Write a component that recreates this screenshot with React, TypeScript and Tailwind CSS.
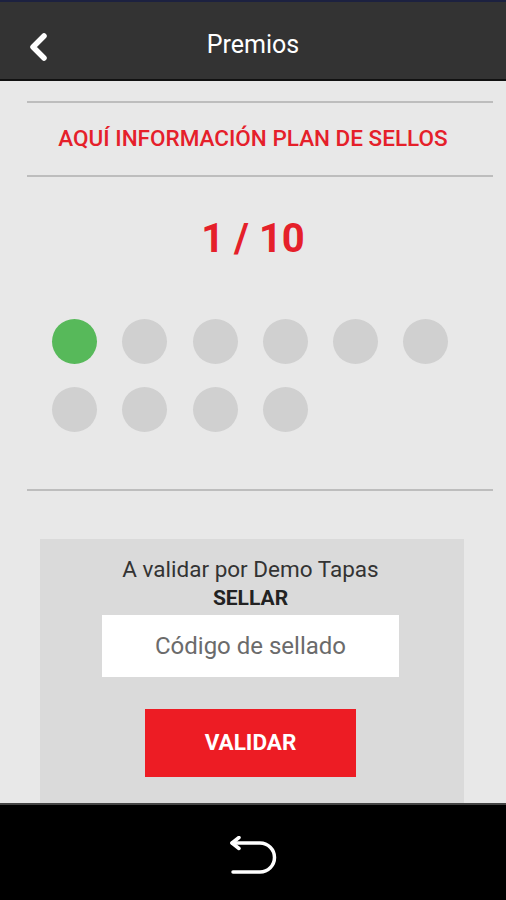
import React from "react";

export default function App() {
  const dots = Array.from({ length: 10 }, (_, i) => i);
  return (
    <div
      className="w-[506px] h-[900px] overflow-hidden bg-[#e8e8e8] flex flex-col relative"
      style={{ fontFamily: "Roboto, 'Liberation Sans', sans-serif" }}
    >
      <div className="h-[2px] bg-[#1c2140]" />
      <div className="h-[79px] bg-[#333333] border-b-2 border-[#111] flex items-center relative shrink-0">
        <svg className="absolute left-[26px] top-[29px]" width="24" height="32" viewBox="0 0 24 32">
          <path d="M18 5 L7 16 L18 27" fill="none" stroke="white" strokeWidth="5.5" strokeLinecap="round" strokeLinejoin="round" />
        </svg>
        <div className="w-full text-center text-white text-[25px] leading-none pt-[7px]">Premios</div>
      </div>

      <div className="pt-[20px] flex flex-col">
        <div className="h-[2px] bg-[#bdbdbd] ml-[27px] mr-[13px]" />
        <div className="h-[72px] flex items-center justify-center text-[#e5202a] text-[22.5px] font-medium">
          AQUÍ INFORMACIÓN PLAN DE SELLOS
        </div>
        <div className="h-[2px] bg-[#bdbdbd] ml-[27px] mr-[13px]" />
        <div className="h-[130px] flex items-center justify-center text-[#e5202a] text-[40px] font-bold pb-[6px]">
          1 / 10
        </div>
        <div className="flex flex-wrap gap-y-[23px] gap-x-[25.3px] pl-[52px] pr-[40px] mt-[12px]">
          {dots.map((i) => (
            <div
              key={i}
              className={`w-[45px] h-[45px] rounded-full ${i === 0 ? "bg-[#57b95a]" : "bg-[#d0d0d0]"}`}
            />
          ))}
        </div>
        <div className="h-[2px] bg-[#bdbdbd] mt-[57px] ml-[27px] mr-[13px]" />
      </div>

      <div className="mx-[40px] w-[424px] mt-[48px] bg-[#dadada] flex flex-col items-center pt-[16px] pr-[3px] h-[300px]">
        <div className="text-[#333] text-[22.5px] leading-[28px]">A validar por Demo Tapas</div>
        <div className="text-[#222] text-[21px] font-bold leading-[26px] mt-[2px]">SELLAR</div>
        <div className="w-[297px] h-[62px] bg-white mt-[4px] flex items-center justify-center text-[#6b6b6b] text-[24px]">
          Código de sellado
        </div>
        <div className="w-[211px] h-[68px] bg-[#ed1c24] mt-[32px] flex items-center justify-center text-white text-[22.5px] font-bold">
          VALIDAR
        </div>
      </div>

      <div className="absolute left-0 right-0 bottom-0 h-[97px] bg-black border-t-2 border-[#444] flex items-center justify-center">
        <svg width="50" height="42" viewBox="0 0 50 42" className="mt-[8px]">
          <path d="M4 7 H32 A14.5 14.5 0 0 1 32 36 H5" fill="none" stroke="white" strokeWidth="3.5" strokeLinecap="round" strokeLinejoin="round" />
          <path d="M11 1.5 L4 7 L11 12.5" fill="none" stroke="white" strokeWidth="3.5" strokeLinecap="round" strokeLinejoin="round" />
        </svg>
      </div>
    </div>
  );
}
